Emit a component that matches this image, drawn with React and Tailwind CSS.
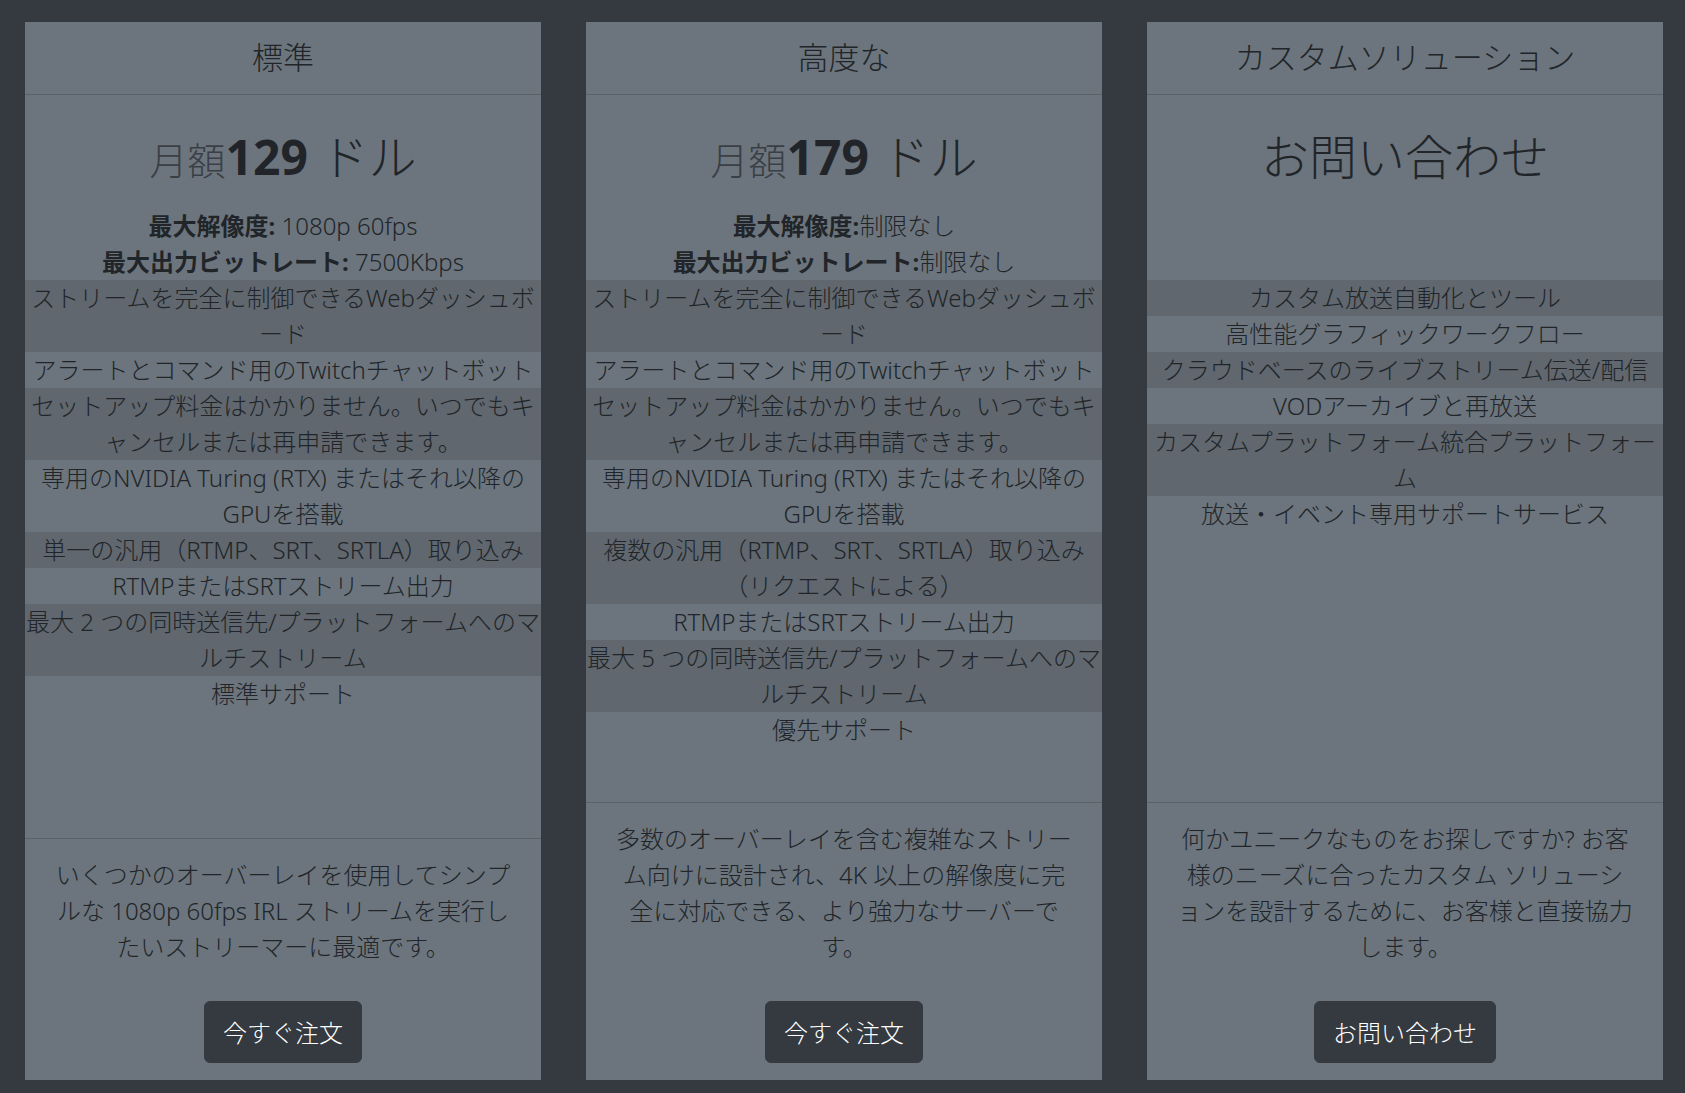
import React from "react";

const FONT = { fontFamily: '"Noto Sans", "Noto Sans CJK JP", sans-serif' };

const PLANS = [
  {
    name: "標準",
    price: "129",
    specs: [
      ["最大解像度:", " 1080p 60fps"],
      ["最大出力ビットレート:", " 7500Kbps"],
    ],
    features: [
      "ストリームを完全に制御できるWebダッシュボード",
      "アラートとコマンド用のTwitchチャットボット",
      "セットアップ料金はかかりません。いつでもキャンセルまたは再申請できます。",
      "専用のNVIDIA Turing (RTX) またはそれ以降のGPUを搭載",
      "単一の汎用（RTMP、SRT、SRTLA）取り込み",
      "RTMPまたはSRTストリーム出力",
      "最大 2 つの同時送信先/プラットフォームへのマルチストリーム",
      "標準サポート",
    ],
    desc: "いくつかのオーバーレイを使用してシンプルな 1080p 60fps IRL ストリームを実行したいストリーマーに最適です。",
    cta: "今すぐ注文",
  },
  {
    name: "高度な",
    price: "179",
    specs: [
      ["最大解像度:", "制限なし"],
      ["最大出力ビットレート:", "制限なし"],
    ],
    features: [
      "ストリームを完全に制御できるWebダッシュボード",
      "アラートとコマンド用のTwitchチャットボット",
      "セットアップ料金はかかりません。いつでもキャンセルまたは再申請できます。",
      "専用のNVIDIA Turing (RTX) またはそれ以降のGPUを搭載",
      "複数の汎用（RTMP、SRT、SRTLA）取り込み（リクエストによる）",
      "RTMPまたはSRTストリーム出力",
      "最大 5 つの同時送信先/プラットフォームへのマルチストリーム",
      "優先サポート",
    ],
    desc: "多数のオーバーレイを含む複雑なストリーム向けに設計され、4K 以上の解像度に完全に対応できる、より強力なサーバーです。",
    cta: "今すぐ注文",
  },
  {
    name: "カスタムソリューション",
    price: null,
    specs: [],
    features: [
      "カスタム放送自動化とツール",
      "高性能グラフィックワークフロー",
      "クラウドベースのライブストリーム伝送/配信",
      "VODアーカイブと再放送",
      "カスタムプラットフォーム統合プラットフォーム",
      "放送・イベント専用サポートサービス",
    ],
    desc: "何かユニークなものをお探しですか? お客様のニーズに合ったカスタム ソリューションを設計するために、お客様と直接協力します。",
    cta: "お問い合わせ",
  },
];

function PlanCard({ plan }) {
  return (
    <div className="flex-1 flex flex-col bg-[#6c757d] text-[#212529] text-center">
      {/* header */}
      <div className="py-[16px] border-b border-[#5a6168]">
        <h4 className="text-[31px] leading-[1.28] font-light">{plan.name}</h4>
      </div>

      {/* body */}
      <div className="pt-[33px] pb-[54px]">
        <h1 className="text-[48px] leading-[1.2] mb-[23px] font-light">
          {plan.price ? (
            <>
              <small className="text-[38px] text-[#3a3f45] font-light">月額</small>
              <span className="font-bold">{plan.price}</span> ドル
            </>
          ) : (
            "お問い合わせ"
          )}
        </h1>
        <div className="h-[72px] text-[24px] leading-[1.5]">
          {plan.specs.map(([label, value]) => (
            <div key={label}>
              <b className="font-bold">{label}</b>
              {value}
            </div>
          ))}
        </div>
        <ul className="text-[24px] leading-[1.5]">
          {plan.features.map((f, i) => (
            <li key={f} className={i % 2 === 0 ? "bg-[#60676e]" : ""}>
              {f}
            </li>
          ))}
        </ul>
      </div>

      {/* footer */}
      <div className="mt-auto border-t border-[#5a6168] px-[28px] pt-[18px] pb-[17px]">
        <p className="text-[24px] leading-[1.5] mb-[36px]">{plan.desc}</p>
        <button className="bg-[#343a40] text-white text-[24px] leading-[1.5] px-[18px] pt-[13px] pb-[11px] border border-[#343a40] rounded-[6px] font-light">
          {plan.cta}
        </button>
      </div>
    </div>
  );
}

export default function App() {
  return (
    <div lang="ja" style={FONT} className="min-h-screen bg-[#343a40] pt-[22px] pb-[14px] pl-[25px] pr-[22px] font-light">
      <div className="flex gap-[45px] items-stretch">
        {PLANS.map((p) => (
          <PlanCard key={p.name} plan={p} />
        ))}
      </div>
    </div>
  );
}
